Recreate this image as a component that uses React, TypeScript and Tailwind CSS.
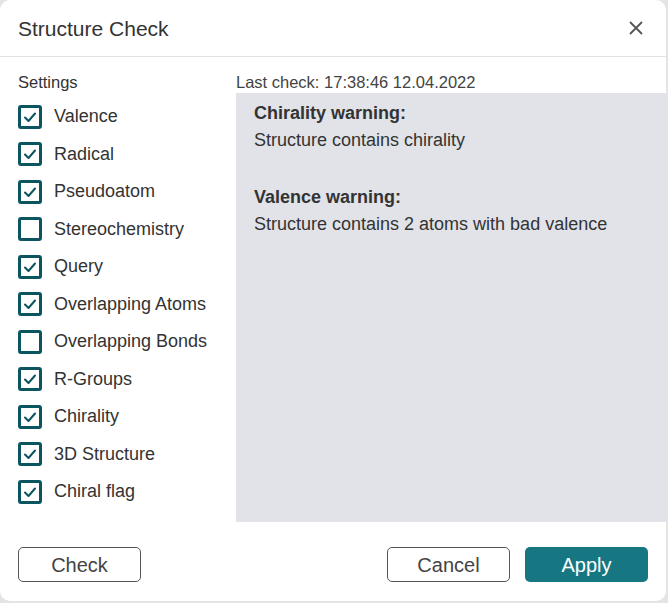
const settings: { label: string; checked: boolean }[] = [
  { label: 'Valence', checked: true },
  { label: 'Radical', checked: true },
  { label: 'Pseudoatom', checked: true },
  { label: 'Stereochemistry', checked: false },
  { label: 'Query', checked: true },
  { label: 'Overlapping Atoms', checked: true },
  { label: 'Overlapping Bonds', checked: false },
  { label: 'R-Groups', checked: true },
  { label: 'Chirality', checked: true },
  { label: '3D Structure', checked: true },
  { label: 'Chiral flag', checked: true },
]

const warnings = [
  { title: 'Chirality warning:', text: 'Structure contains chirality' },
  { title: 'Valence warning:', text: 'Structure contains 2 atoms with bad valence' },
]

function Checkbox({ checked }: { checked: boolean }) {
  return (
    <div className="w-[24px] h-[24px] rounded-[3px] border-[3px] border-[#0b5560] flex items-center justify-center">
      {checked && (
        <svg width="14" height="14" viewBox="0 0 14 14" fill="none">
          <path d="M2 7.5 L5.5 11 L12 3.5" stroke="#0b5560" strokeWidth="2" strokeLinecap="round" strokeLinejoin="round" />
        </svg>
      )}
    </div>
  )
}

export default function App() {
  return (
    <div className="w-[668px] h-[603px] bg-[#e4e4e4] font-['Liberation_Sans',Arial,sans-serif] text-[#333]">
      <div className="w-[666px] h-[601px] bg-white rounded-[10px] flex flex-col">
        <div className="h-[57px] px-[18px] flex items-center justify-between border-b border-[#e2e2e2]">
          <div className="text-[21px] leading-none">Structure Check</div>
          <svg width="14" height="14" viewBox="0 0 14 14" className="mr-[5px]">
            <path d="M1 1 L13 13 M13 1 L1 13" stroke="#555" strokeWidth="1.8" />
          </svg>
        </div>

        <div className="flex pt-[15px]">
          <div className="w-[236px] pl-[18px] flex flex-col">
            <div className="text-[16.5px] leading-[21px]">Settings</div>
            <div className="flex flex-col mt-[5px]">
              {settings.map(s => (
                <div key={s.label} className="h-[37.5px] flex items-center gap-[12px]">
                  <Checkbox checked={s.checked} />
                  <span className="text-[18px]">{s.label}</span>
                </div>
              ))}
            </div>
          </div>

          <div className="flex-1 flex flex-col">
            <div className="text-[16.5px] leading-[21px] text-[#444]">Last check: 17:38:46 12.04.2022</div>
            <div className="h-[429px] bg-[#e1e3e8] pl-[18px] pt-[7px] text-[18px] leading-[27px]">
              {warnings.map(w => (
                <div key={w.title} className="mb-[30px]">
                  <div className="font-bold">{w.title}</div>
                  <div>{w.text}</div>
                </div>
              ))}
            </div>
          </div>
        </div>

        <div className="flex items-center justify-between px-[18px] pt-[25px]">
          <button className="w-[123px] h-[35px] rounded-[5px] border border-[#555] text-[20px] text-[#444]">Check</button>
          <div className="flex gap-[15px]">
            <button className="w-[123px] h-[35px] rounded-[5px] border border-[#555] text-[20px] text-[#444]">Cancel</button>
            <button className="w-[123px] h-[35px] rounded-[5px] bg-[#167782] text-[20px] text-white">Apply</button>
          </div>
        </div>
      </div>
    </div>
  )
}
